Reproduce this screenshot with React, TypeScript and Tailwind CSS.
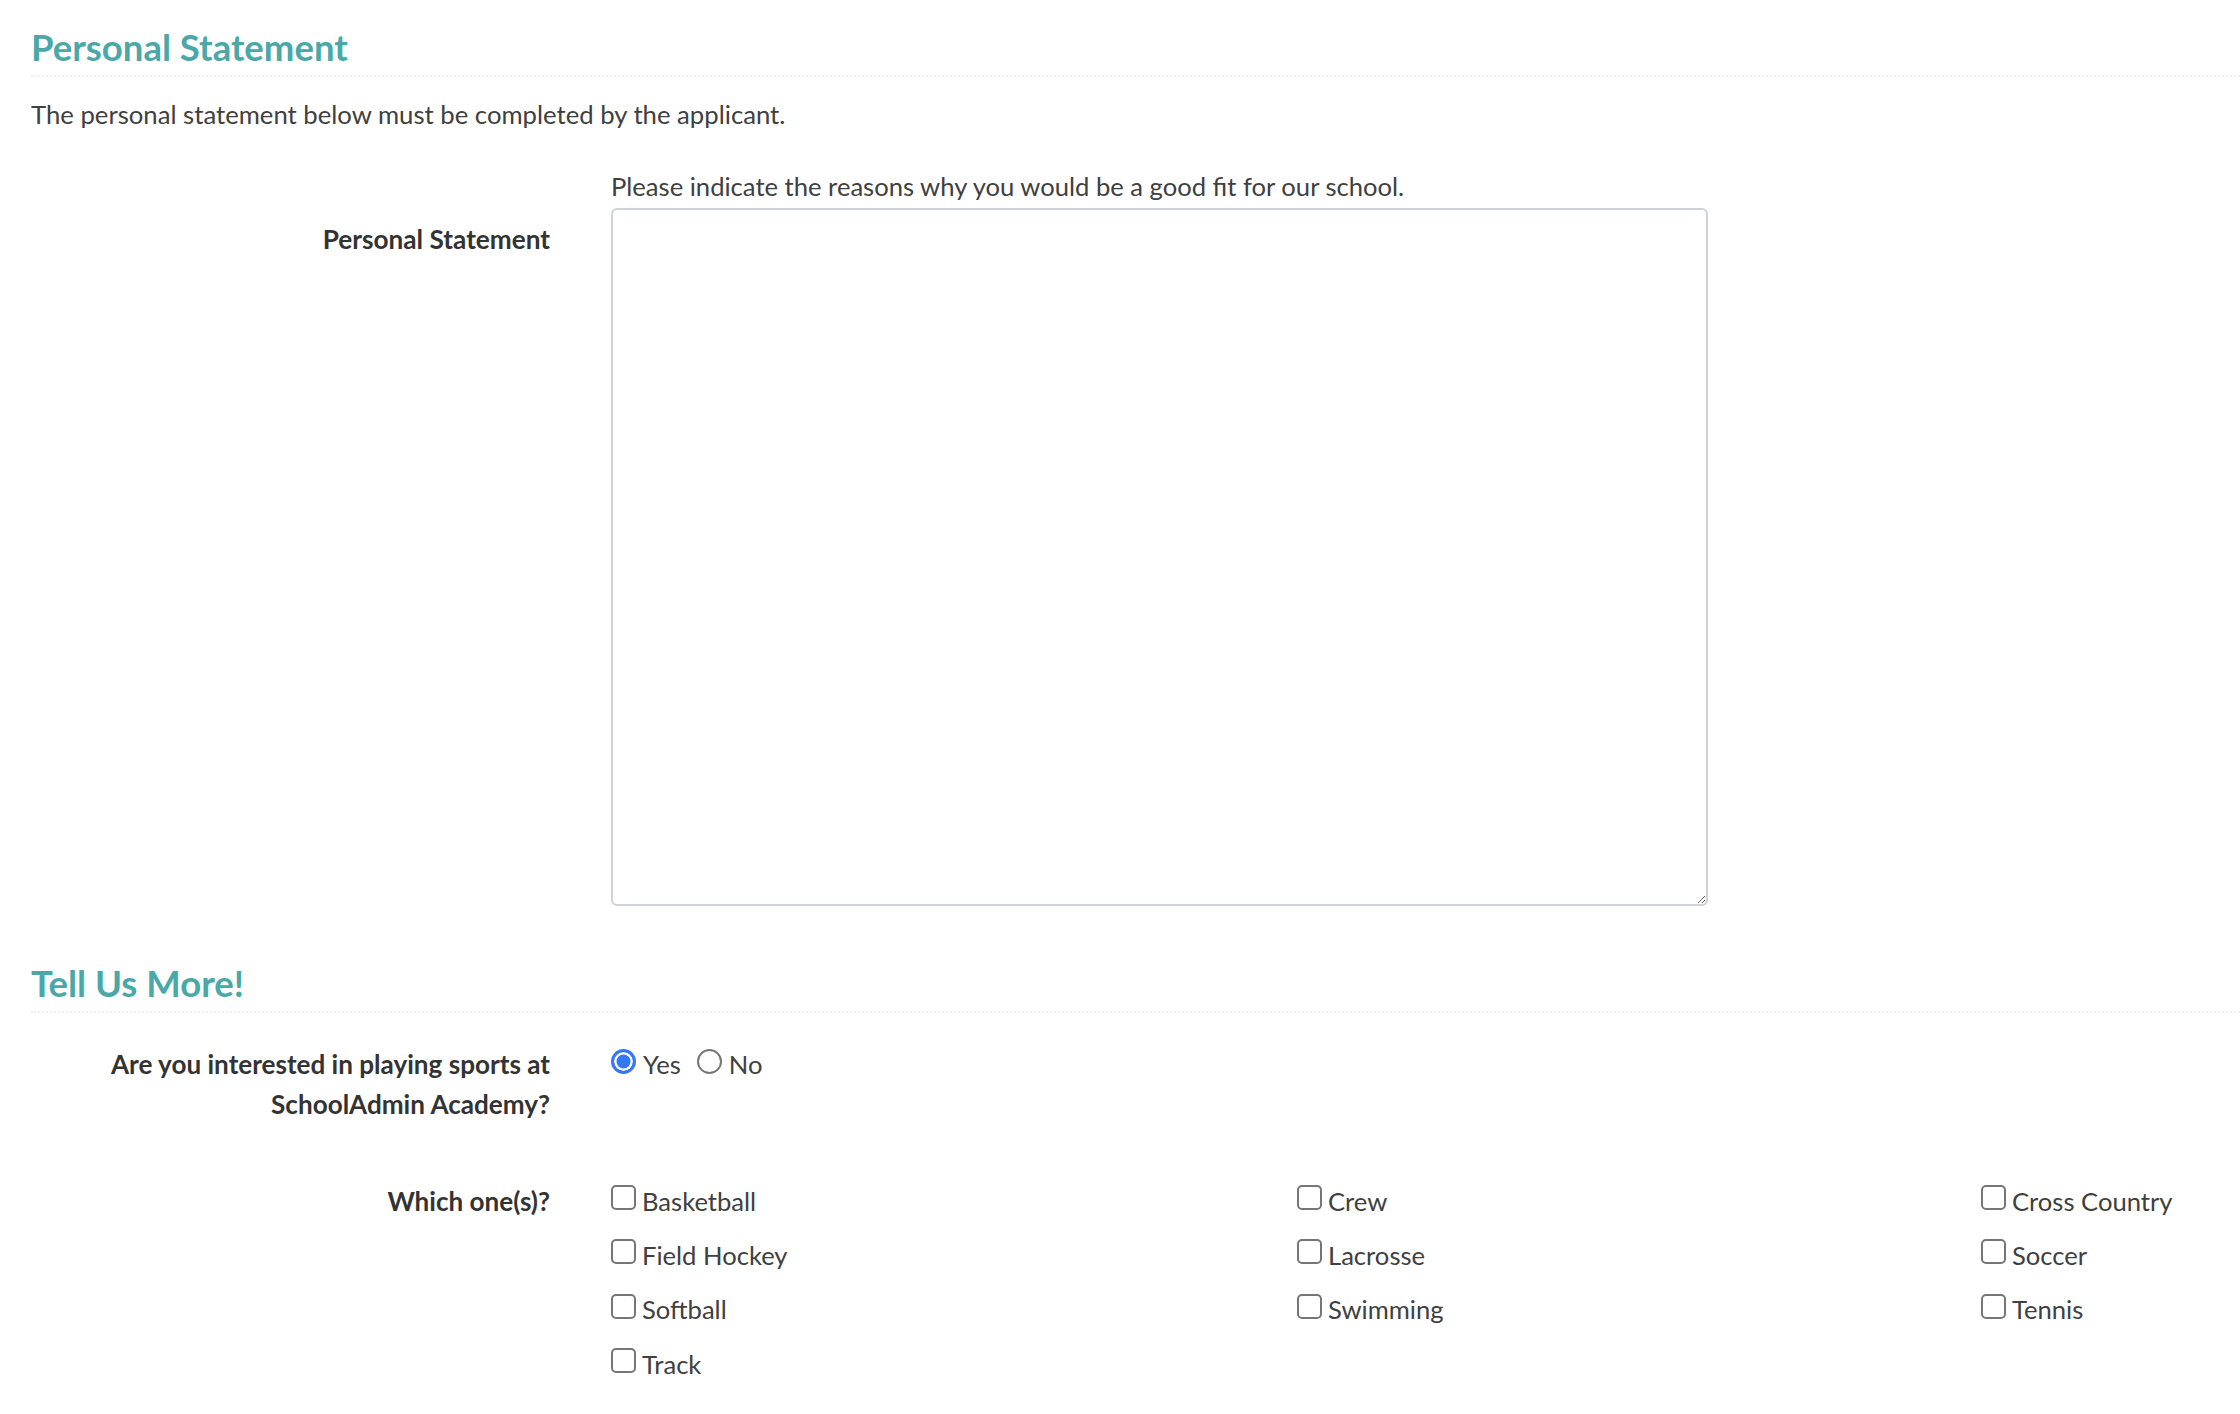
import React from "react";

const sports = [
  "Basketball",
  "Crew",
  "Cross Country",
  "Field Hockey",
  "Lacrosse",
  "Soccer",
  "Softball",
  "Swimming",
  "Tennis",
  "Track",
];

function SectionHeading({ title, className }: { title: string; className?: string }) {
  return (
    <h2
      className={`text-[36.5px] leading-[44px] font-bold text-[#4aa8a8] pb-[6px] border-b-2 border-dotted border-[#ededed] ${className ?? ""}`}
    >
      {title}
    </h2>
  );
}

const radioCls =
  "appearance-none m-0 mr-[7px] w-[25px] h-[25px] -mt-[6px] rounded-full border-2 border-[#767676] bg-white checked:border-[3px] checked:border-[#3478f6] checked:bg-[#3478f6] checked:shadow-[inset_0_0_0_2.5px_white]";

export default function App() {
  return (
    <div className="w-[2240px] min-h-[1414px] bg-white pl-[31px] font-['Lato','Noto_Sans',sans-serif] text-[25.6px] text-[#404040] overflow-hidden">
      <SectionHeading title="Personal Statement" className="pt-[25px]" />
      <p className="mt-[19px] leading-[36px] text-[25.7px]">
        The personal statement below must be completed by the applicant.
      </p>

      {/* personal statement row */}
      <div className="grid grid-cols-[519px_1fr] gap-x-[61px] mt-[36px]">
        <label className="pt-[53px] text-right font-bold text-[26.2px] text-[#333] leading-[36px]">
          Personal Statement
        </label>
        <div>
          <p className="leading-[36px]">
            Please indicate the reasons why you would be a good fit for our school.
          </p>
          <textarea className="mt-[4px] block w-[1097px] h-[698px] border-2 border-[#cfd2d6] rounded-[6px] bg-white outline-none" />
        </div>
      </div>

      <SectionHeading title="Tell Us More!" className="mt-[55px]" />

      {/* sports interest */}
      <div className="grid grid-cols-[519px_1fr] gap-x-[61px] mt-[31px]">
        <label className="text-right font-bold text-[26.1px] text-[#333] leading-[40px]">
          Are you interested in playing sports at SchoolAdmin Academy?
        </label>
        <div className="flex items-center h-[40px]">
          <input type="radio" name="sports" defaultChecked className={radioCls} />
          <span className="mr-[16px]">Yes</span>
          <input type="radio" name="sports" className={radioCls} />
          <span>No</span>
        </div>
      </div>

      {/* which sports */}
      <div className="grid grid-cols-[519px_1fr] gap-x-[61px] mt-[57px]">
        <label className="text-right font-bold text-[26.1px] text-[#333] leading-[40px]">
          Which one(s)?
        </label>
        <div className="grid grid-cols-[686px_684px_auto] gap-y-[14.3px]">
          {sports.map((s) => (
            <label key={s} className="flex items-center h-[40px] whitespace-nowrap">
              <input
                type="checkbox"
                className="appearance-none m-0 mr-[6px] w-[25px] h-[25px] -mt-[7px] rounded-[5px] border-2 border-[#767676] bg-white"
              />
              <span>{s}</span>
            </label>
          ))}
        </div>
      </div>
    </div>
  );
}
